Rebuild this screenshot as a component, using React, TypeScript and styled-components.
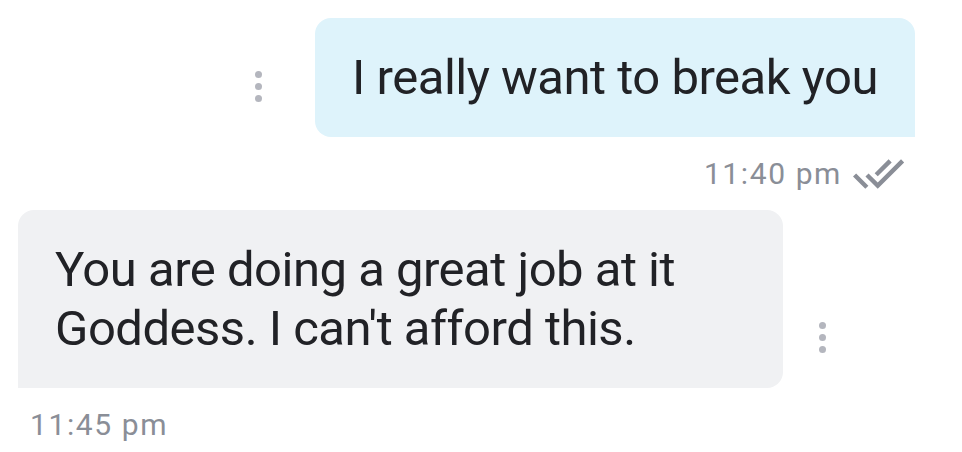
import React from "react";
import styled, { createGlobalStyle } from "styled-components";

const GlobalStyle = createGlobalStyle`
  html, body {
    margin: 0;
    padding: 0;
    background: #ffffff;
    font-family: Roboto, "Noto Sans", "Liberation Sans", sans-serif;
  }
`;

const Thread = styled.div`
  width: 962px;
  height: 452px;
  overflow: hidden;
  display: flex;
  flex-direction: column;
  padding-top: 18px;
  box-sizing: border-box;
`;

const MessageRow = styled.div<{ $out?: boolean }>`
  display: flex;
  flex-direction: ${(p) => (p.$out ? "row-reverse" : "row")};
  align-items: flex-end;
  gap: ${(p) => (p.$out ? "53px" : "36px")};
  padding: ${(p) => (p.$out ? "0 47px 0 0" : "0 0 0 18px")};
`;

const Bubble = styled.div<{ $out?: boolean }>`
  max-width: 691px;
  padding: 30px 37px;
  font-size: 49px;
  line-height: 59px;
  letter-spacing: -0.5px;
  color: #212226;
  background: ${(p) => (p.$out ? "#def3fb" : "#f0f1f3")};
  border-radius: ${(p) => (p.$out ? "16px 16px 0 16px" : "16px 16px 16px 0")};
`;

const MoreButton = styled.div`
  display: flex;
  flex-direction: column;
  gap: 5px;
  margin-bottom: 35px;
  span {
    width: 7px;
    height: 7px;
    border-radius: 50%;
    background: #b4b6be;
  }
`;

const Meta = styled.div<{ $out?: boolean }>`
  display: flex;
  align-items: center;
  justify-content: ${(p) => (p.$out ? "flex-end" : "flex-start")};
  gap: 10px;
  margin-top: 21px;
  padding: ${(p) => (p.$out ? "0 57px 0 0" : "0 0 0 30px")};
  height: 32px;
  margin-bottom: 20px;
`;

const Time = styled.span`
  font-size: 30px;
  line-height: 32px;
  letter-spacing: 1.6px;
  color: #8a8e97;
`;

const ReadTicks = () => (
  <svg width="53" height="33" viewBox="0 5 24 15" fill="#8a8e97">
    <path d="M18 7l-1.41-1.41-6.34 6.34 1.41 1.41L18 7zm4.24-1.41L11.66 16.17 7.48 12l-1.41 1.41L11.66 19l12-12-1.42-1.41zM.41 13.41L6 19l1.41-1.41L1.83 12 .41 13.41z" />
  </svg>
);

const More = () => (
  <MoreButton>
    <span />
    <span />
    <span />
  </MoreButton>
);

export default function App() {
  return (
    <>
      <GlobalStyle />
      <Thread>
        <MessageRow $out>
          <Bubble $out>I really want to break you</Bubble>
          <More />
        </MessageRow>
        <Meta $out>
          <Time>11:40 pm</Time>
          <ReadTicks />
        </Meta>
        <MessageRow>
          <Bubble>You are doing a great job at it Goddess. I can't afford this.</Bubble>
          <More />
        </MessageRow>
        <Meta>
          <Time>11:45 pm</Time>
        </Meta>
      </Thread>
    </>
  );
}
